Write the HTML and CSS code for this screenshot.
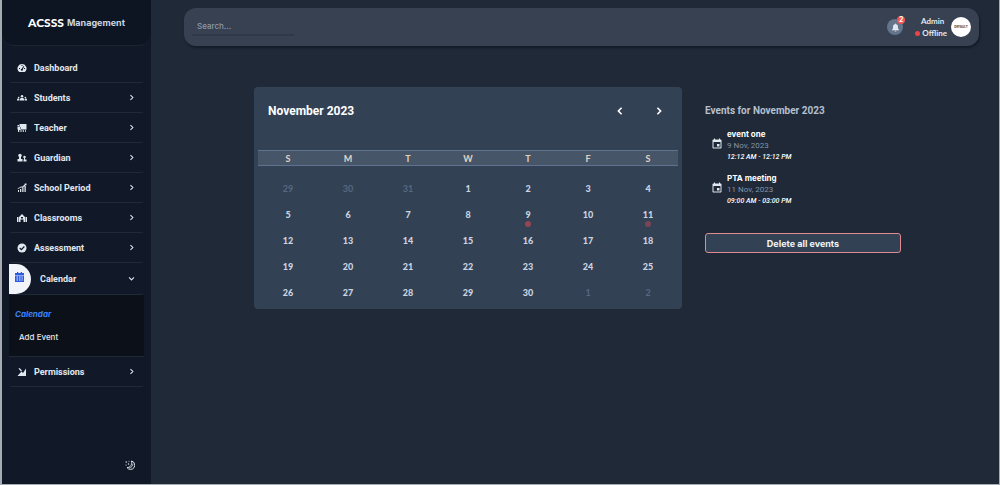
FILE: index.html
```html
<!DOCTYPE html>
<html lang="en">
<head>
<meta charset="utf-8">
<title>ACSSS Management</title>
<link rel="stylesheet" href="styles.css">
</head>
<body>
<svg class="sprite">
  <symbol id="right" viewBox="0 0 10 10"><path d="M3.500 1.500 7 5 3.500 8.500" fill="none" stroke="currentColor" stroke-width="1.500"/></symbol>
  <symbol id="event" viewBox="0 0 24 24"><path d="M17 12h-5v5h5v-5zM16 1v2H8V1H6v2H5c-1.100 0-2 .9-2 2v14c0 1.100.9 2 2 2h14c1.100 0 2-.9 2-2V5c0-1.100-.9-2-2-2h-1V1h-2zm3 18H5V8h14v11z"/></symbol>
</svg>
<div class="app">
  <aside class="sidebar">
    <div class="brand"><strong>ACSSS</strong> Management</div>
    <nav class="nav">
      <a class="item" href="#"><svg class="icon" viewBox="0 0 20 20"><path fill-rule="evenodd" d="M10 2a9 9 0 0 0-7.500 14l2 2h11l2-2A9 9 0 0 0 10 2zM9 4h2v2H9zM4 10h2v2H4zm10 0h2v2h-2zm-1-4 1.500 1-3 5.500a2 2 0 1 1-2-1z"/></svg>Dashboard</a>
      <a class="item" href="#"><svg class="icon" viewBox="0 0 24 24"><circle cx="12" cy="8" r="3"/><circle cx="4" cy="11" r="2"/><circle cx="20" cy="11" r="2"/><path d="M6 18v-2c0-5 12-5 12 0v2zM0 18v-2c0-2 2-3 5-2.500L4.500 18zM24 18v-2c0-2-2-3-5-2.500l.5 4.500z"/></svg>Students<svg class="chev"><use href="#right"/></svg></a>
      <a class="item" href="#"><svg class="icon" viewBox="0 0 20 20"><path d="M5 2h14v10H8V8H5zM1 4h3v3H1zM1 8h6v5h12v1H7v4H5.500v-4H4v4H2v-5H1zM9 14h1.500v4H9zm3.500 0H14v4h-1.500zm3.500 0h1.500v4H16z"/></svg>Teacher<svg class="chev"><use href="#right"/></svg></a>
      <a class="item" href="#"><svg class="icon" viewBox="0 0 20 20"><circle cx="6" cy="5" r="3.500"/><path d="M4 8h4v4h3v5H1v-5h3z"/><circle cx="15" cy="8" r="2.500"/><path d="M14 10h2v3h3v4h-6v-4h1z"/></svg>Guardian<svg class="chev"><use href="#right"/></svg></a>
      <a class="item" href="#"><svg class="icon" viewBox="0 0 20 20"><path d="M2 14h2v4H2zm4-2h2.500v6H6zm4.500-3H13v9h-2.500zM15 6h2.500v12H15zM1 11l7-4 3 0 5-5-1-1h4v4l-1-1-6 5-4 0-6 3z"/></svg>School Period<svg class="chev"><use href="#right"/></svg></a>
      <a class="item" href="#"><svg class="icon" viewBox="0 0 20 20"><path fill-rule="evenodd" d="M0 8h3v10H0zm17 0h3v10h-3zM4 18V8l6-6 6 6v10h-3v-5H7v5zM8 8h4v3H8z"/></svg>Classrooms<svg class="chev"><use href="#right"/></svg></a>
      <a class="item" href="#"><svg class="icon" viewBox="0 0 20 20"><circle cx="10" cy="10" r="9"/><path d="m5.500 10 3.200 3.200 6-6.200" fill="none" stroke="#111827" stroke-width="2.400"/></svg>Assessment<svg class="chev"><use href="#right"/></svg></a>
      <a class="item item-open" href="#"><span class="tab"><svg class="tab-icon" viewBox="0 0 18 20"><path fill-rule="evenodd" d="M4 0h2.500v2h5V0H14v2h4v4H0V2h4zM0 7h18v13H0zm3 2v2h3V9zm5 0v2h3V9zm5 0v2h2.500V9zM3 13v2h3v-2zm5 0v2h3v-2zm5 0v2h2.500v-2zM3 17v1h3v-1zm5 0v1h3v-1zm5 0v1h2.500v-1z"/></svg></span>Calendar<svg class="chev chev-down"><use href="#right"/></svg></a>
      <div class="submenu">
        <a class="sub sub-active" href="#">Calendar</a>
        <a class="sub" href="#">Add Event</a>
      </div>
      <a class="item" href="#"><svg class="icon" viewBox="0 0 20 20"><path d="M1 18 9 9l3 3 6-9v15zM3 3l2-1 5 5-2 2z"/></svg>Permissions<svg class="chev"><use href="#right"/></svg></a>
    </nav>
    <button class="theme" aria-label="Toggle theme"><svg viewBox="0 0 20 20"><path d="M13 2a8.500 8.500 0 1 1-9 13c6 1 11-6 9-13z" fill="none" stroke="currentColor" stroke-width="2"/><path d="M16 7c0 4-3 8-7 9" fill="none" stroke="currentColor" stroke-width="1.500"/><circle cx="2.500" cy="4" r="1.500"/><circle cx="7" cy="8" r="1.500"/><circle cx="2" cy="10" r="1.200"/><circle cx="8" cy="2.500" r="1"/></svg></button>
  </aside>
  <main class="main">
    <header class="topbar">
      <input class="search" type="search" placeholder="Search..." aria-label="Search">
      <div class="account">
        <button class="bell" aria-label="Notifications"><svg viewBox="0 0 20 20"><path d="M10 1a1.500 1.500 0 0 0-1.500 1.500C5 3.500 4.500 6 4.500 9v3L2 15v1h16v-1l-2.500-3V9c0-3-.5-5.500-4-6.500A1.500 1.500 0 0 0 10 1zM8 17h4a2 2 0 0 1-4 0z"/></svg><span class="badge">2</span></button>
        <div class="who"><div>Admin</div><div class="status">Offline</div></div>
        <div class="avatar">DEFAULT</div>
      </div>
    </header>
    <div class="content">
      <section class="calendar">
        <div class="cal-head">
          <h1>November 2023</h1>
          <div class="pager">
            <button aria-label="Previous month"><svg viewBox="0 0 10 10"><path d="M7 1 3 5l4 4"/></svg></button>
            <button aria-label="Next month"><svg viewBox="0 0 10 10"><path d="m3 1 4 4-4 4"/></svg></button>
          </div>
        </div>
        <table class="days">
          <thead><tr><th>S</th><th>M</th><th>T</th><th>W</th><th>T</th><th>F</th><th>S</th></tr></thead>
          <tbody>
            <tr><td class="out">29</td><td class="out">30</td><td class="out">31</td><td>1</td><td>2</td><td>3</td><td>4</td></tr>
            <tr><td>5</td><td>6</td><td>7</td><td>8</td><td><span class="mark">9</span></td><td>10</td><td><span class="mark mark-dim">11</span></td></tr>
            <tr><td>12</td><td>13</td><td>14</td><td>15</td><td>16</td><td>17</td><td>18</td></tr>
            <tr><td>19</td><td>20</td><td>21</td><td>22</td><td>23</td><td>24</td><td>25</td></tr>
            <tr><td>26</td><td>27</td><td>28</td><td>29</td><td>30</td><td class="out">1</td><td class="out">2</td></tr>
          </tbody>
        </table>
      </section>
      <section class="events">
        <h2>Events for November 2023</h2>
        <ul>
          <li><svg class="event-icon"><use href="#event"/></svg><div><h3>event one</h3><p>9 Nov, 2023</p><p class="time">12:12 AM - 12:12 PM</p></div></li>
          <li><svg class="event-icon"><use href="#event"/></svg><div><h3>PTA meeting</h3><p>11 Nov, 2023</p><p class="time">09:00 AM - 03:00 PM</p></div></li>
        </ul>
        <button class="delete">Delete all events</button>
      </section>
    </div>
  </main>
</div>
</body>
</html>
```
FILE: styles.css
```css
* { box-sizing: border-box; }
body { margin: 0; background: #d5d9de; font-family: Inter, sans-serif; color: #e2e8f0; }
button { font: inherit; color: inherit; background: none; border: 0; padding: 0; cursor: pointer; }
a { color: inherit; text-decoration: none; }
h1, h2, h3, p, ul { margin: 0; padding: 0; }
svg { fill: currentColor; }
.sprite { display: none; }

.app { display: flex; min-height: 100vh; border: 0 solid #a5abb3; border-width: 0 1px 1px 2px; background: #1f2937; }

.sidebar { width: 149px; flex: none; display: flex; flex-direction: column; background: #111827; }
.brand { height: 46px; display: flex; align-items: center; justify-content: center; gap: 3px; font: 700 9px Inter, sans-serif; color: #cbd5e1; background: #0d1522; border-bottom: 1px solid #1b2431; border-radius: 0 0 12px 12px; }
.brand strong { font: 900 12px Lato, sans-serif; color: #fff; }
.nav { margin: 7px 7px 0; }
.item { height: 30px; display: flex; align-items: center; gap: 7px; padding: 0 9px 0 8px; font: 700 9px Roboto, sans-serif; border-bottom: 1px solid #1f2937; border-radius: 3px; }
.icon { width: 10px; height: 10px; }
.chev { width: 7px; height: 7px; margin-left: auto; }
.chev-down { transform: rotate(90deg); }
.item-open { height: 32px; padding-left: 0; gap: 9px; }
.tab { width: 22px; height: 30px; flex: none; display: flex; align-items: center; padding: 0 0 4px 6px; background: #f1f5f9; border-radius: 0 15px 15px 0; color: #2f5be0; }
.tab-icon { width: 9px; height: 10px; }
.submenu { height: 62px; padding: 12px 6px; display: flex; flex-direction: column; gap: 8px; background: #0c1018; border-bottom: 1px solid #1f2937; }
.sub { font-size: 8px; line-height: 15px; font-weight: 500; padding-left: 4px; }
.sub-active { color: #3b82f6; font-weight: 700; font-style: italic; padding-left: 0; }
.theme { width: 10px; height: 10px; margin: auto 16px 14px auto; display: flex; }

.main { flex: 1; min-width: 0; padding: 8px 20px 0 33px; }
.topbar { height: 38px; display: flex; align-items: center; justify-content: space-between; padding: 0 8px; background: #374151; border-radius: 12px; box-shadow: 1px 2px 2px #141c29; }
.search { width: 102px; height: 18px; padding: 0 5px; font: 500 8px Inter, sans-serif; color: #e2e8f0; background: none; border: 0; border-bottom: 2px solid #2b394b; outline: 0; }
.search::placeholder { color: #9099a5; opacity: 1; }
.account { display: flex; align-items: center; }
.bell { position: relative; width: 16px; height: 16px; display: flex; align-items: center; justify-content: center; background: #64748b; border-radius: 50%; }
.bell svg { width: 9px; height: 9px; }
.badge { position: absolute; top: -3px; right: -2px; width: 8px; height: 8px; border-radius: 50%; background: #ef5555; color: #fff; font-size: 7px; line-height: 8px; font-weight: 700; text-align: center; }
.who { margin: 0 4px 0 12px; font: 700 8px/12px Lato, sans-serif; text-align: center; }
.who div:first-child { padding-left: 3px; }
.status { display: flex; align-items: center; gap: 2px; }
.status::before { content: ""; width: 5px; height: 5px; border-radius: 50%; background: #ef4444; }
.avatar { width: 20px; height: 20px; border-radius: 50%; background: #fff; color: #333; font: 700 3px/20px Inter, sans-serif; text-align: center; }

.content { display: flex; align-items: flex-start; padding: 41px 78px 0 70px; gap: 23px; }
.calendar { flex: 420 1 0; padding: 14px 4px 4px; background: #334155; border-radius: 4px; }
.cal-head { display: flex; align-items: center; justify-content: space-between; padding: 0 14px 0 10px; height: 20px; }
h1 { font: 700 12px Roboto, sans-serif; color: #fff; }
.pager { display: flex; gap: 29px; }
.pager button { width: 10px; height: 10px; display: flex; align-items: center; justify-content: center; }
.pager svg { width: 8px; height: 8px; fill: none; stroke: #fff; stroke-width: 2; }
.days { width: 100%; margin-top: 29px; table-layout: fixed; border-collapse: collapse; text-align: center; font: 900 9px Lato, sans-serif; color: #cbd5e1; }
.days th { height: 15px; padding: 0; background: #475569; border: solid #5f7390; border-width: 1px 0; color: #e0d3c2; font-weight: 700; }
.days tbody::before { content: ""; display: block; height: 9px; }
.days td { height: 26px; padding: 0; }
.days .out { color: #566780; font-weight: 700; }
.mark { position: relative; }
.mark::after { content: ""; position: absolute; left: 50%; top: 12px; width: 6px; height: 6px; margin-left: -3px; border-radius: 50%; background: #944651; }
.mark-dim::after { background: #7b4653; }

.events { flex: 196 1 0; padding-top: 18px; }
h2 { font: 700 10px/12px Roboto, sans-serif; color: #b6c0ce; }
.events ul { list-style: none; margin-top: 11px; display: grid; gap: 10px; }
.events li { display: flex; align-items: center; gap: 4px; padding-left: 6px; }
.event-icon { width: 12px; height: 12px; margin-bottom: 2px; }
h3 { font-size: 8px; line-height: 12px; font-weight: 700; color: #fff; }
.events p { font: 400 8px/12px Roboto, sans-serif; color: #8493a8; }
.events .time { font: italic 500 7px/10px Roboto, sans-serif; color: #fff; }
.delete { width: 100%; height: 20px; margin-top: 27px; background: #334155; border: 1px solid #dd8b91; border-radius: 3px; font-size: 9px; font-weight: 700; color: #f1f5f9; }
```
